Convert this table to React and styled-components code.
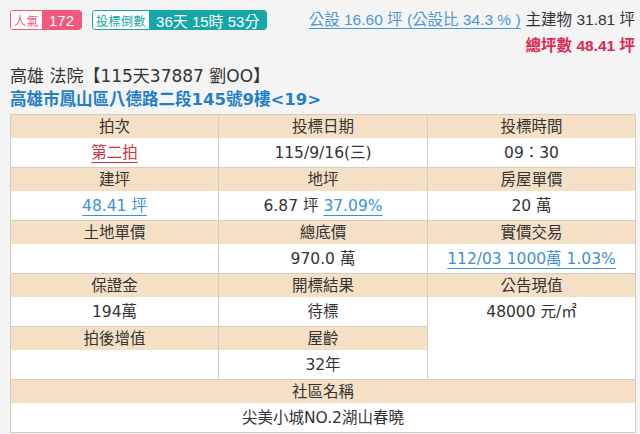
import React from "react";
import styled, { createGlobalStyle } from "styled-components";

const Global = createGlobalStyle`
  html, body { margin: 0; padding: 0; background: #f4f4f4; }
  body { font-family: "Liberation Sans", "Noto Sans CJK TC", sans-serif; color: #333; }
`;

const Page = styled.div`
  padding: 10px 5px 0 10px;
  width: 625px;
`;

const TopBar = styled.div`
  display: flex;
  justify-content: space-between;
  align-items: flex-start;
`;

const Badges = styled.div`
  display: flex;
  gap: 10px;
`;

const Badge = styled.div`
  display: flex;
  height: 20px;
  border: 1px solid ${(p) => p.$color};
  border-radius: 3px;
  overflow: hidden;
  box-sizing: border-box;
  font-family: "Liberation Sans", "Noto Sans CJK TC", sans-serif;
`;

const BadgeLabel = styled.span`
  display: flex;
  align-items: center;
  padding: 0 3px;
  background: #fff;
  color: ${(p) => p.$color};
  font-size: 12px;
  letter-spacing: 0.5px;
`;

const BadgeValue = styled.span`
  display: flex;
  align-items: center;
  padding: 0 ${(p) => p.$pad}px;
  background: ${(p) => p.$color};
  color: #fff;
  font-size: 15px;
`;

const Info = styled.div`
  display: flex;
  flex-direction: column;
  align-items: flex-end;
  gap: 8px;
  padding-top: 1px;
  font-size: 15.5px;
  line-height: 18px;
`;

const InfoLine = styled.div`
  display: flex;
  gap: 5px;
`;

const PublicLink = styled.a`
  color: #4a97d8;
  text-decoration: underline;
  text-underline-offset: 3px;
`;

const Total = styled.span`
  color: #e0274f;
  font-weight: bold;
  font-size: 15.5px;
`;

const Title = styled.div`
  margin-top: 9px;
  font-size: 17px;
  line-height: 24px;
  color: #333;
  font-family: "DejaVu Sans", "Noto Sans CJK TC", sans-serif;
`;

const Address = styled.div`
  font-size: 16.5px;
  line-height: 24px;
  color: #1f7fc8;
  font-weight: bold;
  font-family: "DejaVu Sans", "Noto Sans CJK TC", sans-serif;
`;

const Table = styled.table`
  width: 625px;
  margin-top: 2px;
  border-collapse: collapse;
  table-layout: fixed;
  background: #fff;
  font-family: "DejaVu Sans", "Noto Sans CJK TC", sans-serif;
  font-size: 15.5px;
  color: #333;
  border: 1px solid #d6cdc2;
`;

const HeadCell = styled.td`
  background: #f5e0c6;
  height: 21px;
  padding: 2px 0 0;
  text-align: center;
  border-left: 1px solid #d6cdc2;
  border-right: 1px solid #d6cdc2;
  border-top: 1px solid #d6cdc2;
  line-height: 21px;
`;

const ValueCell = styled.td`
  height: 27px;
  padding: 2px 0 0;
  text-align: center;
  background: #fff;
  border-left: 1px solid #d6cdc2;
  border-right: 1px solid #d6cdc2;
  line-height: 27px;
`;

const Link = styled.a`
  color: ${(p) => (p.$red ? "#d3323a" : "#3d8fd6")};
  text-decoration: underline;
  text-underline-offset: 4px;
`;

const rows = [
  [
    ["拍次", <Link $red>第二拍</Link>],
    ["投標日期", "115/9/16(三)"],
    ["投標時間", "09：30"],
  ],
  [
    ["建坪", <Link>48.41 坪</Link>],
    ["地坪", <>6.87 坪 <Link>37.09%</Link></>],
    ["房屋單價", "20 萬"],
  ],
  [
    ["土地單價", ""],
    ["總底價", "970.0 萬"],
    ["實價交易", <Link>112/03 1000萬 1.03%</Link>],
  ],
  [
    ["保證金", "194萬"],
    ["開標結果", "待標"],
    ["公告現值", "48000 元/㎡"],
  ],
];

export default function App() {
  return (
    <Page>
      <Global />
      <TopBar>
        <Badges>
          <Badge $color="#ef5a7a">
            <BadgeLabel $color="#ef5a7a">人氣</BadgeLabel>
            <BadgeValue $color="#ef5a7a" $pad={7}>172</BadgeValue>
          </Badge>
          <Badge $color="#16a6a6">
            <BadgeLabel $color="#16a6a6">投標倒數</BadgeLabel>
            <BadgeValue $color="#16a6a6" $pad={7}>36天 15時 53分</BadgeValue>
          </Badge>
        </Badges>
        <Info>
          <InfoLine>
            <PublicLink>公設 16.60 坪 (公設比 34.3 % )</PublicLink>
            <span>主建物 31.81 坪</span>
          </InfoLine>
          <InfoLine>
            <Total>總坪數 48.41 坪</Total>
          </InfoLine>
        </Info>
      </TopBar>
      <Title>高雄 法院【115天37887 劉OO】</Title>
      <Address>高雄市鳳山區八德路二段145號9樓&lt;19&gt;</Address>
      <Table>
        <colgroup>
          <col style={{ width: 208 }} />
          <col style={{ width: 209 }} />
          <col style={{ width: 208 }} />
        </colgroup>
        <tbody>
          {rows.map((r, i) => (
            <React.Fragment key={i}>
              <tr>
                {r.map((c, j) => (
                  <HeadCell key={j}>{c[0]}</HeadCell>
                ))}
              </tr>
              <tr>
                {r.map((c, j) => (
                  <ValueCell key={j}>{c[1]}</ValueCell>
                ))}
              </tr>
            </React.Fragment>
          ))}
          <tr>
            <HeadCell>拍後增值</HeadCell>
            <HeadCell>屋齡</HeadCell>
            <ValueCell rowSpan={2} />
          </tr>
          <tr>
            <ValueCell></ValueCell>
            <ValueCell>32年</ValueCell>
          </tr>
          <tr>
            <HeadCell colSpan={3}>社區名稱</HeadCell>
          </tr>
          <tr>
            <ValueCell colSpan={3}>尖美小城NO.2湖山春曉</ValueCell>
          </tr>
        </tbody>
      </Table>
    </Page>
  );
}
